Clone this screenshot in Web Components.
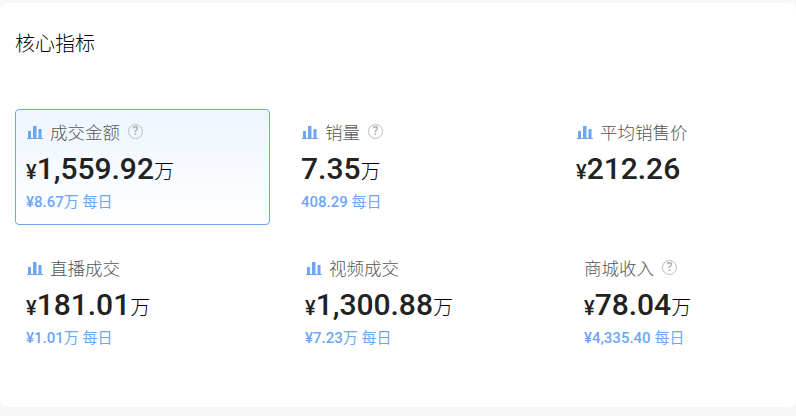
<!DOCTYPE html>
<html lang="zh">
<head>
<meta charset="utf-8">
<title>核心指标</title>
<style>
  html, body { margin: 0; height: 100%; background: #f7f7f7; }
  body { padding: 3px 0 9px; box-sizing: border-box; font-family: Roboto, "Noto Sans CJK SC", sans-serif; overflow: hidden; }
</style>
</head>
<body>
<metric-panel heading="核心指标">
  <metric-row style="--row-gap: 20px">
    <metric-card label="成交金额" chart help active yen value="1,559.92" unit="万" daily="¥8.67万"></metric-card>
    <metric-card label="销量" chart help value="7.35" unit="万" daily="408.29"></metric-card>
    <metric-card label="平均销售价" chart yen value="212.26"></metric-card>
  </metric-row>
  <metric-row style="--row-gap: 24px">
    <metric-card label="直播成交" chart yen value="181.01" unit="万" daily="¥1.01万"></metric-card>
    <metric-card label="视频成交" chart yen value="1,300.88" unit="万" daily="¥7.23万"></metric-card>
    <metric-card label="商城收入" help yen value="78.04" unit="万" daily="¥4,335.40"></metric-card>
  </metric-row>
</metric-panel>

<script>
  class MetricPanel extends HTMLElement {
    constructor() {
      super();
      this.attachShadow({ mode: "open" });
    }

    connectedCallback() {
      this.shadowRoot.innerHTML = `
        <style>
          :host {
            display: flex;
            flex-direction: column;
            gap: 20px;
            height: 100%;
            box-sizing: border-box;
            padding: 28px 15px 0;
            background: #fff;
            border-radius: 8px;
          }
          h2 {
            margin: 0 0 32px;
            font-size: 20px;
            line-height: 26px;
            font-weight: 300;
            color: #000;
          }
        </style>
        <h2>${this.getAttribute("heading")}</h2>
        <slot></slot>
      `;
    }
  }

  class MetricRow extends HTMLElement {
    constructor() {
      super();
      this.attachShadow({ mode: "open" });
    }

    connectedCallback() {
      this.shadowRoot.innerHTML = `
        <style>
          :host {
            display: flex;
            gap: var(--row-gap);
          }
        </style>
        <slot></slot>
      `;
    }
  }

  class MetricCard extends HTMLElement {
    constructor() {
      super();
      this.attachShadow({ mode: "open" });
    }

    connectedCallback() {
      const chart = `<svg class="chart" width="16" height="13" viewBox="0 0 16 13" fill="#6ea6f5">
          <rect x="1" y="5" width="3" height="7"/><rect x="6" y="0" width="3.5" height="12"/>
          <rect x="11.5" y="3" width="3" height="9"/><rect x="0" y="12" width="16" height="1"/>
        </svg>`;
      const help = `<span class="help">?</span>`;
      const unit = this.getAttribute("unit");
      const daily = this.getAttribute("daily");

      this.shadowRoot.innerHTML = `
        <style>
          :host {
            display: flex;
            flex-direction: column;
            flex: 0 0 255px;
            height: 116px;
            box-sizing: border-box;
            padding: 9px 10px 0;
            border: 1px solid transparent;
            border-radius: 4px;
          }
          :host([active]) {
            border-color: #6ea6f0;
            background: linear-gradient(180deg, #eef5ff, #fff);
          }
          .label {
            display: flex;
            align-items: center;
            gap: 7px;
            height: 24px;
            font-size: 17.5px;
            font-weight: 300;
            color: #555;
          }
          .chart { margin: 2px 0 0 1px; }
          .help {
            width: 13px;
            height: 13px;
            margin-left: 1px;
            border: 1.5px solid #bbb;
            border-radius: 50%;
            font-size: 12px;
            font-weight: 500;
            line-height: 13px;
            text-align: center;
            color: #aaa;
          }
          .value {
            margin-top: 8px;
            height: 36px;
            line-height: 36px;
            font-size: 30px;
            font-weight: 500;
            color: #222;
            white-space: nowrap;
          }
          .yen { font-size: 20px; }
          .unit { font-size: 20px; font-weight: 300; color: #000; }
          .daily {
            margin-top: 5px;
            line-height: 20px;
            font-size: 15px;
            font-weight: 500;
            color: #6ea6f5;
          }
          .daily span { font-weight: 400; }
        </style>
        <div class="label">
          ${this.hasAttribute("chart") ? chart : ""}
          <span>${this.getAttribute("label")}</span>
          ${this.hasAttribute("help") ? help : ""}
        </div>
        <div class="value">${this.hasAttribute("yen") ? '<span class="yen">¥</span>' : ""}${this.getAttribute("value")}${unit ? `<span class="unit">${unit}</span>` : ""}</div>
        ${daily ? `<div class="daily">${daily.replace("万", "<span>万</span>")} <span>每日</span></div>` : ""}
      `;
    }
  }

  customElements.define("metric-panel", MetricPanel);
  customElements.define("metric-row", MetricRow);
  customElements.define("metric-card", MetricCard);
</script>
</body>
</html>
